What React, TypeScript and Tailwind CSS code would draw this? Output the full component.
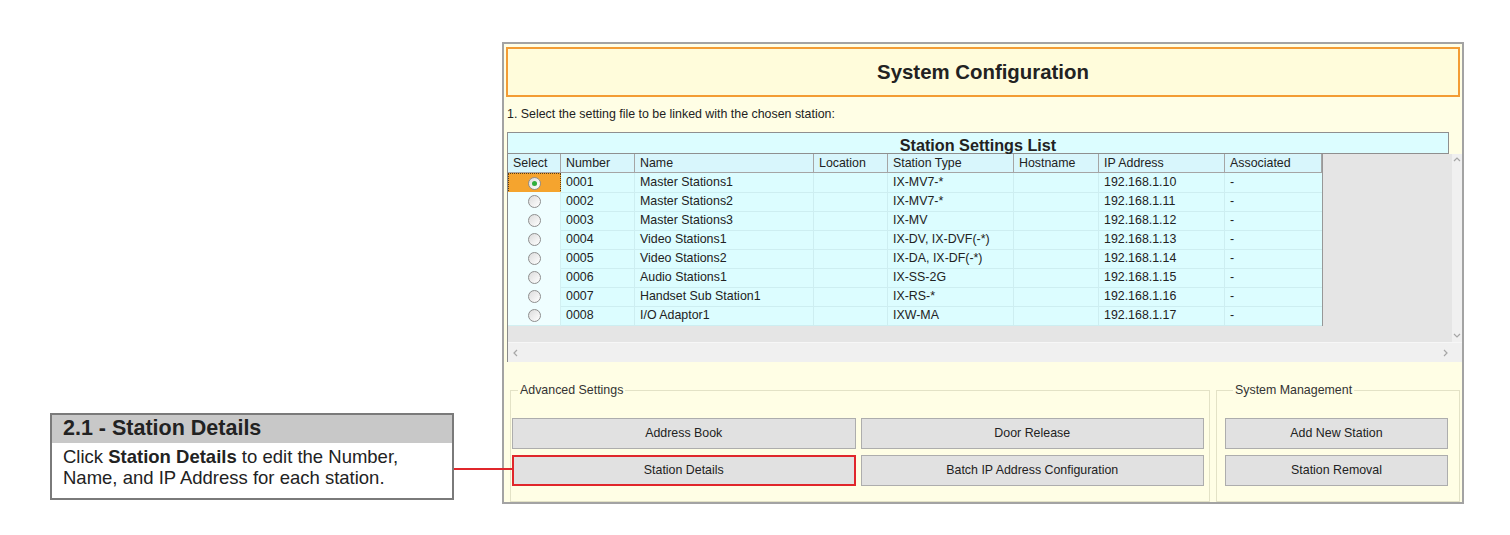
import React from 'react';

const stations = [
  ['0001', 'Master Stations1', 'IX-MV7-*', '192.168.1.10'],
  ['0002', 'Master Stations2', 'IX-MV7-*', '192.168.1.11'],
  ['0003', 'Master Stations3', 'IX-MV', '192.168.1.12'],
  ['0004', 'Video Stations1', 'IX-DV, IX-DVF(-*)', '192.168.1.13'],
  ['0005', 'Video Stations2', 'IX-DA, IX-DF(-*)', '192.168.1.14'],
  ['0006', 'Audio Stations1', 'IX-SS-2G', '192.168.1.15'],
  ['0007', 'Handset Sub Station1', 'IX-RS-*', '192.168.1.16'],
  ['0008', 'I/O Adaptor1', 'IXW-MA', '192.168.1.17'],
];

const headers = ['Select', 'Number', 'Name', 'Location', 'Station Type', 'Hostname', 'IP Address', 'Associated'];

const cols = 'grid grid-cols-[53px_74px_179px_74px_126px_85px_126px_97px]';

function Radio({ checked }: { checked: boolean }) {
  return (
    <span className="w-[13px] h-[13px] rounded-full border border-[#8e8e8e] bg-linear-to-br from-[#dcdcdc] to-white flex items-center justify-center">
      {checked && <span className="w-[5px] h-[5px] rounded-full bg-[#2fae3c]" />}
    </span>
  );
}

function Chevron({ dir }: { dir: 'up' | 'down' | 'left' | 'right' }) {
  const d = {
    up: 'M1 5 L4 2 L7 5',
    down: 'M1 2 L4 5 L7 2',
    left: 'M5 1 L2 4 L5 7',
    right: 'M2 1 L5 4 L2 7',
  }[dir];
  return (
    <svg width="8" height="8" viewBox="0 0 8 8" className="shrink-0">
      <path d={d} fill="none" stroke="#a6a6a6" strokeWidth="1.2" />
    </svg>
  );
}

function Btn({ label, marked }: { label: string; marked?: boolean }) {
  return (
    <button
      className={
        marked
          ? 'h-[31px] bg-[#e1e1e1] border-2 border-[#e0262b] text-[12.4px] text-[#222]'
          : 'h-[31px] bg-[#e1e1e1] border border-[#adadad] text-[12.4px] text-[#222]'
      }
    >
      {label}
    </button>
  );
}

export default function App() {
  return (
    <div className="w-[1510px] h-[535px] bg-white relative flex items-start pt-[42px] pl-[50px] font-['Liberation_Sans',Arial,sans-serif] text-[#222]">
      {/* Callout */}
      <div className="w-[404px] mt-[371px] border-2 border-[#7a7a7a] bg-white">
        <div className="h-[28px] bg-[#c8c8c8] flex items-center pl-[11px] text-[21.5px] font-bold leading-none">
          2.1 - Station Details
        </div>
        <div className="pl-[11px] pt-[3px] pb-[10px] text-[18.5px] leading-[21px]">
          <div>
            Click <span className="font-bold">Station Details</span> to edit the Number,
          </div>
          <div>Name, and IP Address for each station.</div>
        </div>
      </div>

      {/* Window */}
      <div className="ml-[48px] w-[962px] h-[462px] border-2 border-[#a3a3a3] bg-[#fffee5] flex flex-col">
        <div className="mt-[3px] mx-[2px] h-[50px] border-2 border-[#f39c34] bg-[#fffcdb] flex items-center justify-center text-[20.4px] font-bold">
          System Configuration
        </div>
        <div className="h-[36px] flex items-center pl-[3px] text-[12.4px]">
          1. Select the setting file to be linked with the chosen station:
        </div>
        <div className="ml-[3px] w-[942px] h-[22px] border border-[#8f8f8f] bg-[#dcfdff] flex items-center justify-center pt-[3px] text-[16.2px] font-bold">
          Station Settings List
        </div>

        {/* Scroll area */}
        <div className="ml-[3px] border-l border-[#8a8a8a] flex flex-col">
          <div className="h-[188px] bg-[#e5e5e5] flex">
            <div className="self-start border-r border-b border-[#979797] text-[12.4px]">
              <div className={cols + ' h-[19px] bg-[#d8f6fc] border-b border-[#a5a5a5]'}>
                {headers.map((h) => (
                  <div key={h} className="px-[5px] flex items-center border-r border-[#a5a5a5]">
                    {h}
                  </div>
                ))}
              </div>
              {stations.map(([num, name, type, ip], i) => (
                <div key={num} className={cols + ' h-[19px] bg-[#dcfdff]'}>
                  {i === 0 ? (
                    <div className="flex items-center justify-center bg-[#f5a42e] border border-dotted border-[#5e3d10]">
                      <Radio checked />
                    </div>
                  ) : (
                    <div className="flex items-center justify-center bg-[#effeff] border-r border-b border-[#d2f0f2]">
                      <Radio checked={false} />
                    </div>
                  )}
                  <div className="px-[5px] flex items-center border-r border-b border-[#cdeef1]">{num}</div>
                  <div className="px-[5px] flex items-center border-r border-b border-[#cdeef1]">{name}</div>
                  <div className="px-[5px] flex items-center border-r border-b border-[#cdeef1]"></div>
                  <div className="px-[5px] flex items-center border-r border-b border-[#cdeef1] whitespace-nowrap">{type}</div>
                  <div className="px-[5px] flex items-center border-r border-b border-[#cdeef1]"></div>
                  <div className="px-[5px] flex items-center border-r border-b border-[#cdeef1]">{ip}</div>
                  <div className="px-[5px] flex items-center border-b border-[#cdeef1]">-</div>
                </div>
              ))}
            </div>
            <div className="flex-1" />
            <div className="w-[10px] bg-[#f0f0f0] flex flex-col items-center justify-between py-[2px]">
              <Chevron dir="up" />
              <Chevron dir="down" />
            </div>
          </div>
          <div className="h-[20px] bg-[#f0f0f0] border-t border-[#f7f7f7] flex items-center justify-between pl-[4px] pr-[12px]">
            <Chevron dir="left" />
            <Chevron dir="right" />
          </div>
        </div>

        {/* Settings groups */}
        <div className="mt-[19px] pl-[6px] pr-[2px] flex gap-[6px] text-[12.4px]">
          <fieldset className="w-[700px] border border-[#e3e2c6] pl-[1px] pr-[5px] pb-[15px]">
            <legend className="ml-[6px] px-[2px] text-[#333]">Advanced Settings</legend>
            <div className="mt-[18px] grid grid-cols-2 gap-x-[5px] gap-y-[6px]">
              <Btn label="Address Book" />
              <Btn label="Door Release" />
              <Btn label="Station Details" marked />
              <Btn label="Batch IP Address Configuration" />
            </div>
          </fieldset>
          <fieldset className="w-[244px] border border-[#e3e2c6] pl-[8px] pr-[11px] pb-[15px]">
            <legend className="ml-[8px] px-[2px] text-[#333]">System Management</legend>
            <div className="mt-[18px] flex flex-col gap-[6px]">
              <Btn label="Add New Station" />
              <Btn label="Station Removal" />
            </div>
          </fieldset>
        </div>
      </div>

      {/* Connector line */}
      <div className="absolute left-[454px] top-[468px] w-[58px] h-[2px] bg-[#e0262b]" />
    </div>
  );
}
